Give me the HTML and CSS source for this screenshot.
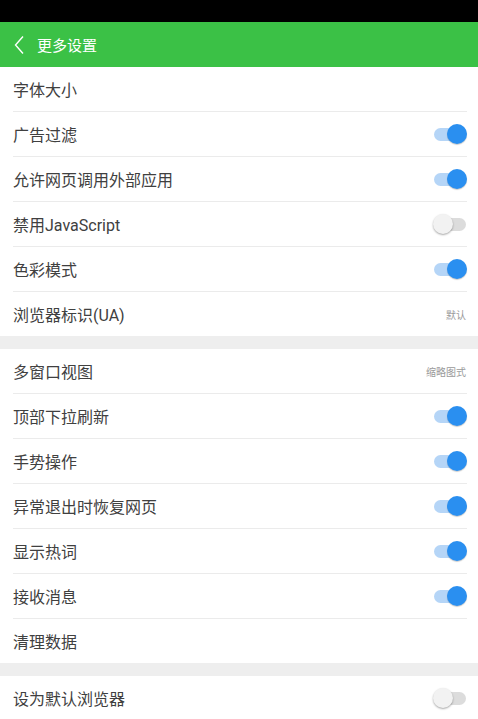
FILE: index.html
```html
<!DOCTYPE html>
<html lang="zh-CN">
<head>
    <meta charset="UTF-8">
    <meta name="viewport" content="width=device-width, initial-scale=1.0">
    <title>更多设置</title>
    <link rel="stylesheet" href="styles.css">
</head>
<body>
    <div class="status-bar"></div>
    <header class="top-bar">
        <svg class="back" width="12" height="20" viewBox="0 0 12 20">
            <path d="M10 1.5 L2.5 10 L10 18.5" fill="none" stroke="#fff" stroke-width="1.4"/>
        </svg>
        <span class="title">更多设置</span>
    </header>

    <div class="group">
        <div class="row"><span>字体大小</span></div>
        <div class="row"><span>广告过滤</span><span class="switch on"></span></div>
        <div class="row"><span>允许网页调用外部应用</span><span class="switch on"></span></div>
        <div class="row"><span>禁用JavaScript</span><span class="switch"></span></div>
        <div class="row"><span>色彩模式</span><span class="switch on"></span></div>
        <div class="row"><span>浏览器标识(UA)</span><span class="value">默认</span></div>
    </div>

    <div class="group">
        <div class="row"><span>多窗口视图</span><span class="value">缩略图式</span></div>
        <div class="row"><span>顶部下拉刷新</span><span class="switch on"></span></div>
        <div class="row"><span>手势操作</span><span class="switch on"></span></div>
        <div class="row"><span>异常退出时恢复网页</span><span class="switch on"></span></div>
        <div class="row"><span>显示热词</span><span class="switch on"></span></div>
        <div class="row"><span>接收消息</span><span class="switch on"></span></div>
        <div class="row"><span>清理数据</span></div>
    </div>

    <div class="group">
        <div class="row"><span>设为默认浏览器</span><span class="switch"></span></div>
    </div>
</body>
</html>
```

FILE: styles.css
```css
body {
    margin: 0;
    background: #eeeeee;
    font-family: Roboto, "Noto Sans CJK SC", sans-serif;
    color: #404040;
    overflow: hidden;
}

.status-bar {
    height: 22px;
    background: #000;
}

.top-bar {
    height: 45px;
    background: #3bc146;
    display: flex;
    align-items: center;
    padding-left: 13px;
}

.back {
    display: block;
    margin-right: 12px;
}

.title {
    color: #fff;
    font-size: 15px;
}

.group {
    background: #fff;
    margin-bottom: 13px;
}

.row {
    height: 44px;
    margin: 0 11px 0 13px;
    border-bottom: 1px solid #ebebeb;
    display: flex;
    align-items: center;
    justify-content: space-between;
    font-size: 16px;
}

.row:last-child {
    border-bottom: none;
}

.value {
    font-size: 10px;
    color: #9a9a9a;
    margin-right: 1px;
}

.switch {
    position: relative;
    width: 32px;
    height: 13px;
    border-radius: 7px;
    background: #dcdcdc;
    margin-right: 1px;
}

.switch::after {
    content: "";
    position: absolute;
    top: -4px;
    left: -1px;
    width: 20px;
    height: 20px;
    border-radius: 50%;
    background: #f2f2f2;
    box-shadow: 0 1px 2px rgba(0, 0, 0, 0.35);
}

.switch.on {
    background: #b5d5f7;
}

.switch.on::after {
    left: auto;
    right: -1px;
    background: #2a8ff0;
    box-shadow: 0 1px 1px rgba(0, 0, 0, 0.2);
}
```
